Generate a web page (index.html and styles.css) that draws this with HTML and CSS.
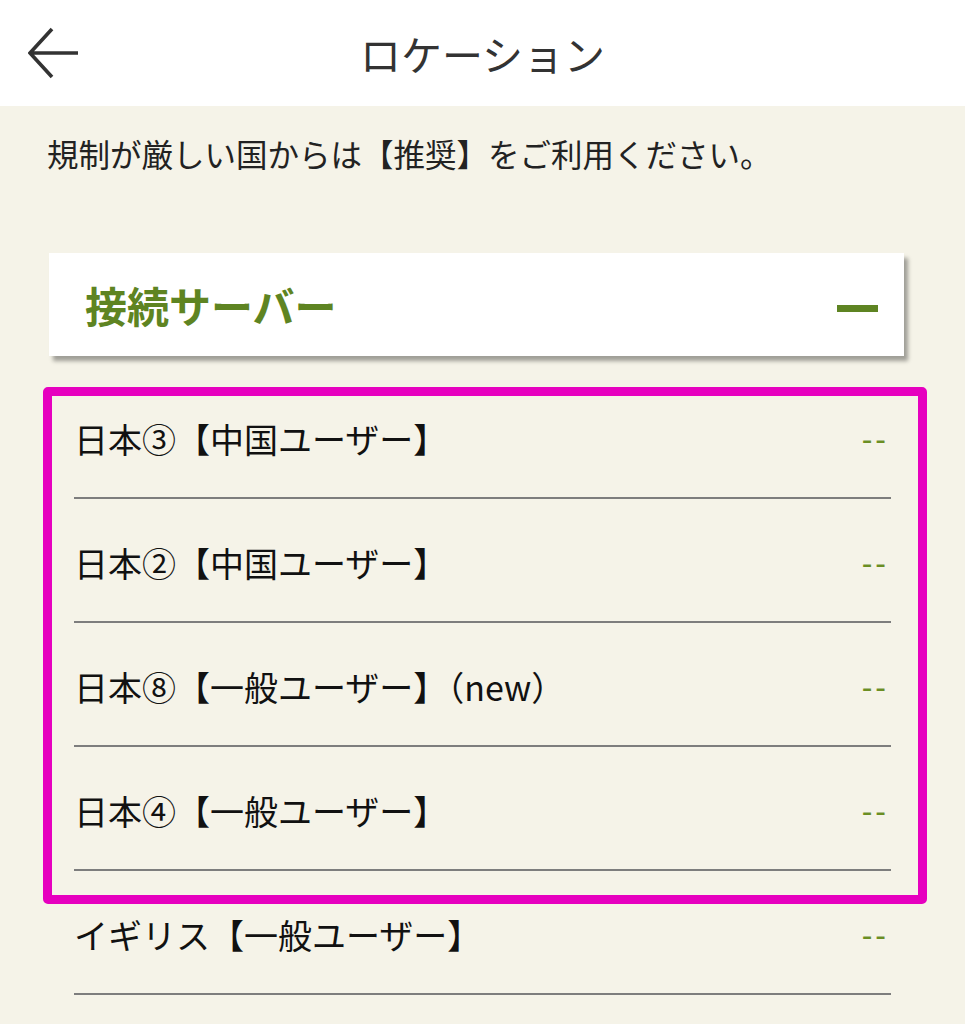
FILE: index.html
```html
<!DOCTYPE html>
<html lang="ja">
<head>
  <meta charset="UTF-8">
  <title>ロケーション</title>
  <link rel="stylesheet" href="styles.css">
</head>
<body>

<header class="topbar">
  <a class="back" href="#" aria-label="戻る">
    <svg width="52" height="52" viewBox="0 0 52 52" fill="none" stroke="#333" stroke-width="3.6">
      <path d="M24 2 L2 26 L24 50 M2 26 H50"/>
    </svg>
  </a>
  <h1 class="title">ロケーション</h1>
  <span></span>
</header>

<p class="notice">規制が厳しい国からは【推奨】をご利用ください。</p>

<div class="panel">
  <h2 class="panel-title">接続サーバー</h2>
  <span class="collapse"></span>
</div>

<ul class="servers">
  <li class="server"><span class="name">日本③【中国ユーザー】</span><span class="ping">--</span></li>
  <li class="server"><span class="name">日本②【中国ユーザー】</span><span class="ping">--</span></li>
  <li class="server"><span class="name">日本⑧【一般ユーザー】（new）</span><span class="ping">--</span></li>
  <li class="server"><span class="name">日本④【一般ユーザー】</span><span class="ping">--</span></li>
  <li class="server"><span class="name">イギリス【一般ユーザー】</span><span class="ping">--</span></li>
  <li class="highlight"></li>
</ul>

</body>
</html>
```

FILE: styles.css
```css
body { margin: 0; background: #f5f3e8; color: #111; font-family: "Noto Sans CJK JP", "Noto Sans", sans-serif; }

.topbar { height: 106px; background: #fff; display: grid; grid-template-columns: 1fr auto 1fr; align-items: center; }
.back { display: flex; padding-left: 28px; }
.title { margin: 0; font-size: 41px; font-weight: 400; color: #333; }

.notice { margin: 27px 47px 0; font-size: 31.5px; line-height: 40px; color: #222; }

.panel {
  margin: 80px 61px 0 49px; height: 103px; background: #fff;
  display: flex; justify-content: space-between; align-items: center;
  padding: 0 26px 0 36px; box-shadow: 4px 5px 4px rgba(0, 0, 0, 0.35);
}
.panel-title { margin: 0; font-size: 42px; font-weight: 700; color: #5e8422; }
.collapse { width: 41px; height: 7px; background: #5e8422; margin-top: 8px; }

.servers { list-style: none; margin: 19px 74px 0; padding: 0; position: relative; }
.server {
  display: flex; justify-content: space-between; align-items: center;
  padding: 44px 2px 38px 0; height: 40px; border-bottom: 2.5px solid #7d7d7d;
}
.name { font-size: 34px; line-height: 40px; }
.ping { font-family: "Liberation Sans", sans-serif; font-size: 32px; letter-spacing: 3px; color: #6b8e23; }

.highlight {
  position: absolute; left: -31px; top: 12px; width: 866px; height: 499px;
  border: 9px solid #e600bf; border-radius: 5px;
}
```
